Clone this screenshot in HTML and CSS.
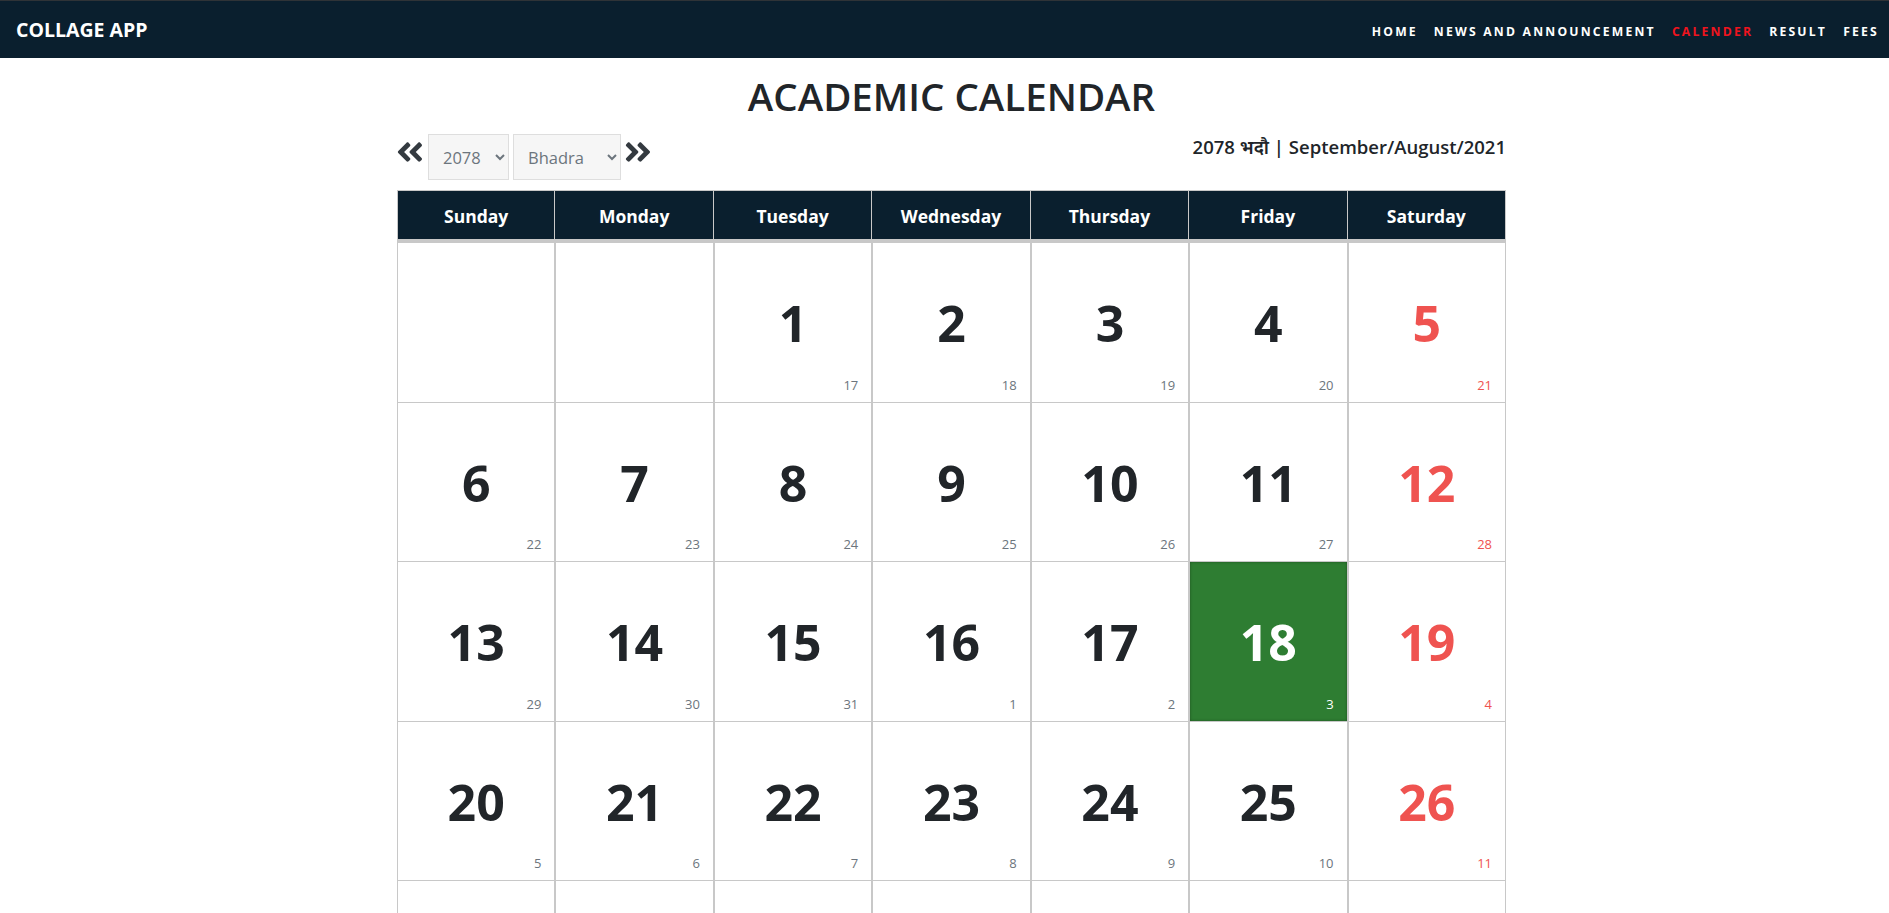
FILE: index.html
```html
<!DOCTYPE html>
<html lang="en">
<head>
<meta charset="utf-8">
<title>Academic Calendar</title>
<link rel="stylesheet" href="styles.css">
</head>
<body>
<nav class="navbar">
  <a class="brand" href="#">COLLAGE APP</a>
  <ul class="nav-links">
    <li><a href="#">HOME</a></li>
    <li><a href="#">NEWS AND ANNOUNCEMENT</a></li>
    <li><a href="#" class="active">CALENDER</a></li>
    <li><a href="#">RESULT</a></li>
    <li><a href="#">FEES</a></li>
  </ul>
</nav>
<main class="container">
  <h1 class="title">ACADEMIC CALENDAR</h1>
  <div class="controls">
    <div class="picker">
      <a href="#" class="chev" aria-label="Previous month">
        <svg viewBox="20 90 410 330" width="26" height="20"><path fill="currentColor" d="M223.7 239l136-136c9.4-9.4 24.6-9.4 33.9 0l22.6 22.6c9.4 9.4 9.4 24.6 0 33.9L319.9 256l96.4 96.4c9.4 9.4 9.4 24.6 0 33.9L393.7 409c-9.4 9.4-24.6 9.4-33.9 0l-136-136c-9.5-9.4-9.5-24.6-.1-34zm-192 34l136 136c9.4 9.4 24.6 9.4 33.9 0l22.6-22.6c9.4-9.4 9.4-24.6 0-33.9L127.9 256l96.4-96.4c9.4-9.4 9.4-24.6 0-33.9L201.7 103c-9.4-9.4-24.6-9.4-33.900 0l-136 136c-9.5 9.4-9.5 24.6-.1 34z"/></svg>
      </a>
      <select class="sel sel-year"><option>2078</option><option>2077</option></select>
      <select class="sel sel-month"><option>Bhadra</option><option>Asoj</option></select>
      <a href="#" class="chev" aria-label="Next month">
        <svg viewBox="20 90 410 330" width="26" height="20"><path fill="currentColor" d="M224.3 273l-136 136c-9.4 9.4-24.6 9.4-33.9 0l-22.6-22.6c-9.4-9.4-9.4-24.6 0-33.9l96.4-96.4-96.4-96.4c-9.4-9.4-9.4-24.6 0-33.9L54.3 103c9.4-9.4 24.6-9.4 33.9 0l136 136c9.5 9.4 9.5 24.6.1 34zm192-34l-136-136c-9.4-9.4-24.6-9.4-33.9 0l-22.6 22.6c-9.4 9.4-9.4 24.6 0 33.9l96.4 96.4-96.4 96.4c-9.4 9.4-9.4 24.6 0 33.9l22.6 22.6c9.4 9.4 24.6 9.4 33.9 0l136-136c9.4-9.2 9.4-24.4 0-33.8z"/></svg>
      </a>
    </div>
    <div class="month-label">2078 भदौ | September/August/2021</div>
  </div>

  <div class="calendar">
    <div class="head">Sunday</div>
    <div class="head">Monday</div>
    <div class="head">Tuesday</div>
    <div class="head">Wednesday</div>
    <div class="head">Thursday</div>
    <div class="head">Friday</div>
    <div class="head">Saturday</div>

    <div class="cell"></div>
    <div class="cell"></div>
    <div class="cell"><span class="day">1</span><span class="ad">17</span></div>
    <div class="cell"><span class="day">2</span><span class="ad">18</span></div>
    <div class="cell"><span class="day">3</span><span class="ad">19</span></div>
    <div class="cell"><span class="day">4</span><span class="ad">20</span></div>
    <div class="cell holiday"><span class="day">5</span><span class="ad">21</span></div>

    <div class="cell"><span class="day">6</span><span class="ad">22</span></div>
    <div class="cell"><span class="day">7</span><span class="ad">23</span></div>
    <div class="cell"><span class="day">8</span><span class="ad">24</span></div>
    <div class="cell"><span class="day">9</span><span class="ad">25</span></div>
    <div class="cell"><span class="day">10</span><span class="ad">26</span></div>
    <div class="cell"><span class="day">11</span><span class="ad">27</span></div>
    <div class="cell holiday"><span class="day">12</span><span class="ad">28</span></div>

    <div class="cell"><span class="day">13</span><span class="ad">29</span></div>
    <div class="cell"><span class="day">14</span><span class="ad">30</span></div>
    <div class="cell"><span class="day">15</span><span class="ad">31</span></div>
    <div class="cell"><span class="day">16</span><span class="ad">1</span></div>
    <div class="cell"><span class="day">17</span><span class="ad">2</span></div>
    <div class="cell today"><span class="day">18</span><span class="ad">3</span></div>
    <div class="cell holiday"><span class="day">19</span><span class="ad">4</span></div>

    <div class="cell"><span class="day">20</span><span class="ad">5</span></div>
    <div class="cell"><span class="day">21</span><span class="ad">6</span></div>
    <div class="cell"><span class="day">22</span><span class="ad">7</span></div>
    <div class="cell"><span class="day">23</span><span class="ad">8</span></div>
    <div class="cell"><span class="day">24</span><span class="ad">9</span></div>
    <div class="cell"><span class="day">25</span><span class="ad">10</span></div>
    <div class="cell holiday"><span class="day">26</span><span class="ad">11</span></div>

    <div class="cell"><span class="day">27</span><span class="ad">12</span></div>
    <div class="cell"><span class="day">28</span><span class="ad">13</span></div>
    <div class="cell"><span class="day">29</span><span class="ad">14</span></div>
    <div class="cell"><span class="day">30</span><span class="ad">15</span></div>
    <div class="cell"><span class="day">31</span><span class="ad">16</span></div>
    <div class="cell"></div>
    <div class="cell holiday"></div>
  </div>
</main>
</body>
</html>
```

FILE: styles.css
```css
* { box-sizing: border-box; }

body {
  margin: 0;
  font-family: "Open Sans", "Noto Sans", "Noto Sans Devanagari", "DejaVu Sans", sans-serif;
  color: #212529;
  background: #fff;
}

.navbar {
  height: 58px;
  background: #0a1f2e;
  border-top: 1px solid #2f3337;
  display: flex;
  align-items: center;
  justify-content: space-between;
  padding: 0 10px 0 16px;
}

.brand {
  color: #fff;
  text-decoration: none;
  font-weight: 700;
  font-size: 19.5px;
}

.nav-links {
  list-style: none;
  margin: 0;
  padding: 0;
  display: flex;
  gap: 16px;
}

.nav-links a {
  color: #fff;
  text-decoration: none;
  font-weight: 700;
  font-size: 12.2px;
  letter-spacing: 2.2px;
}

.nav-links a.active { color: #f0141e; }

.container {
  width: 1123px;
  margin: 0 auto;
  padding-left: 14px;
}

.title {
  margin: 14px 0 0;
  text-align: center;
  font-size: 38.5px;
  font-weight: 600;
  line-height: 48px;
  color: #212529;
}

.controls {
  margin-top: 14px;
  display: flex;
  justify-content: space-between;
  align-items: flex-start;
  height: 46px;
}

.picker {
  display: flex;
  align-items: flex-start;
  gap: 4px;
}

.chev {
  color: #343a40;
  display: flex;
  margin-top: 8px;
}

.chev:first-child { margin-right: 1px; }

.sel {
  height: 46px;
  font-family: inherit;
  font-size: 16.5px;
  color: #6c757d;
  background-color: #f6f6f6;
  border: 1px solid #dedede;
  border-radius: 0;
  padding: 0 8px 0 10px;
}

.sel-year { width: 81px; }
.sel-month { width: 108px; }

.month-label {
  font-size: 18.5px;
  font-weight: 600;
  line-height: 24px;
  margin-top: 1px;
  color: #212529;
}

.calendar {
  margin-top: 10px;
  width: 1109px;
  display: grid;
  grid-template-columns: repeat(7, 1fr);
  border-top: 1px solid #c8c8c8;
}

.head {
  height: 52px;
  background: #0a1f2e;
  color: #fff;
  font-weight: 700;
  font-size: 17.5px;
  display: flex;
  align-items: center;
  justify-content: center;
  border-right: 1px solid #c8c8c8;
  border-bottom: 4px solid #c8c8c8;
  padding-top: 1px;
}

.head:first-child { border-left: 1px solid #c8c8c8; }

.cell {
  height: 159.5px;
  border-left: 1px solid #c8c8c8;
  border-right: 1px solid #c8c8c8;
  border-bottom: 1px solid #c8c8c8;
  display: grid;
  grid-template: 1fr / 1fr;
  background: #fff;
}

.day {
  grid-area: 1 / 1;
  place-self: center;
  font-size: 50px;
  font-weight: 700;
  color: #212529;
  line-height: 1;
  margin-top: 2px;
}

.ad {
  grid-area: 1 / 1;
  align-self: end;
  justify-self: end;
  font-size: 13px;
  color: #6c757d;
  margin: 0 13px 8px 0;
  line-height: 18px;
}

.holiday .day,
.holiday .ad { color: #ef5350; }

.today {
  background: #2e7d32;
  box-shadow: inset 0 0 3px rgba(0, 0, 0, 0.35);
}

.today .day,
.today .ad { color: #fff; }
```
